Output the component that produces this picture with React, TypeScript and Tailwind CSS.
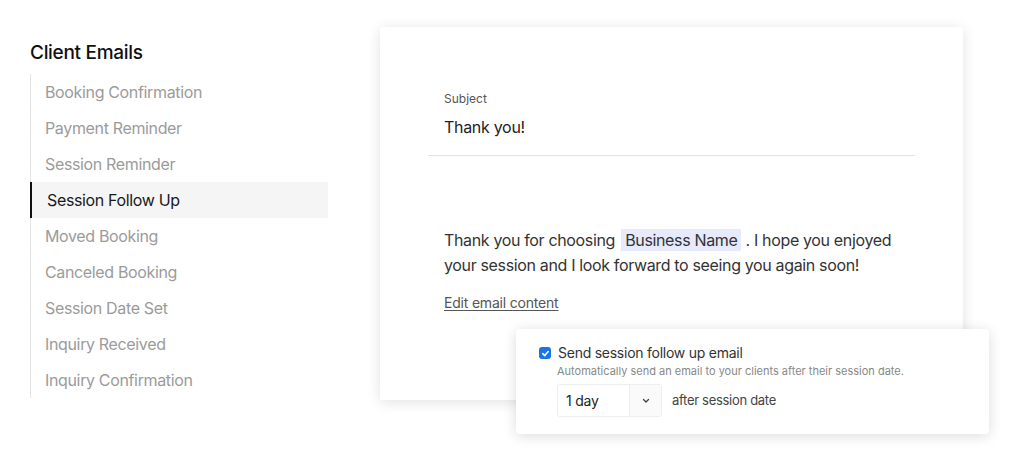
import React from "react";

const items = [
  "Booking Confirmation",
  "Payment Reminder",
  "Session Reminder",
  "Session Follow Up",
  "Moved Booking",
  "Canceled Booking",
  "Session Date Set",
  "Inquiry Received",
  "Inquiry Confirmation",
];

export default function App() {
  return (
    <div
      className="w-[1015px] h-[460px] bg-white relative overflow-hidden"
      style={{ fontFamily: "Inter, 'Liberation Sans', sans-serif" }}
    >
      <div className="flex pt-[27px]">
        {/* Sidebar */}
        <div className="w-[350px] pl-[30px] shrink-0">
          <div className="text-[19px] leading-[24px] text-[#111] mt-[14px] tracking-[-0.3px] font-medium">Client Emails</div>
          <div className="mt-[9px] border-l border-[#e3e3e3] w-[298px]">
            {items.map((it) => {
              const active = it === "Session Follow Up";
              return (
                <div
                  key={it}
                  className={
                    active
                      ? "h-[36px] flex items-center pl-[15px] text-[16px] text-[#1a1a1a] bg-[#f5f5f5] border-l-[2px] border-[#111] -ml-[1px] tracking-[-0.35px]"
                      : "h-[36px] flex items-center pl-[14px] text-[16px] text-[#9b9b9b] tracking-[-0.35px]"
                  }
                >
                  {it}
                </div>
              );
            })}
          </div>
        </div>

        {/* Card */}
        <div className="ml-[30px] w-[583px] h-[373px] bg-white shadow-[0_2px_14px_rgba(0,0,0,0.12)] rounded-[2px] px-[48px] pt-[65px]">
          <div className="px-[16px]">
            <div className="text-[12px] text-[#555] leading-[14px]">Subject</div>
            <div className="text-[16px] text-[#222] mt-[11px] leading-[20px] tracking-[-0.3px]">Thank you!</div>
          </div>
          <div className="mt-[18px] border-t border-[#e2e2e2]" />
          <div className="px-[16px] mt-[72px]">
            <div className="text-[16px] leading-[25px] text-[#333] tracking-[-0.35px]">
              Thank you for choosing{" "}
              <span className="inline-block bg-[#e6eafb] px-[4px] leading-[22px] ml-[2px]">Business Name</span> . I hope you enjoyed
              your session and I look forward to seeing you again soon!
            </div>
            <div className="mt-[14px] text-[14px] text-[#555] underline underline-offset-2 tracking-[-0.2px]">Edit email content</div>
          </div>
        </div>
      </div>

      {/* Popover */}
      <div className="absolute left-[516px] top-[329px] w-[473px] h-[105px] bg-white rounded-[4px] shadow-[0_2px_14px_rgba(0,0,0,0.14)] pl-[23px] pt-[15px]">
        <div className="flex items-center gap-[7px]">
          <div className="w-[12px] h-[12px] rounded-[3px] bg-[#1a73e8] flex items-center justify-center">
            <svg width="9" height="9" viewBox="0 0 10 10">
              <path d="M2 5.2 L4.2 7.3 L8 2.8" stroke="white" strokeWidth="1.8" fill="none" strokeLinecap="round" strokeLinejoin="round" />
            </svg>
          </div>
          <div className="text-[14px] text-[#333] leading-[18px] tracking-[-0.25px]">Send session follow up email</div>
        </div>
        <div className="ml-[18px] mt-[2px] text-[11px] text-[#888] leading-[14px]">
          Automatically send an email to your clients after their session date.
        </div>
        <div className="ml-[18px] mt-[6px] flex items-center">
          <div className="flex h-[33px] border border-[#eee] rounded-[3px]">
            <div className="w-[71px] flex items-center pl-[8px] text-[14px] text-[#222] tracking-[-0.2px]">1 day</div>
            <div className="w-[32px] border-l border-[#eee] bg-[#fafafa] flex items-center justify-center">
              <svg width="8" height="6" viewBox="0 0 8 6">
                <path d="M1.5 1.5 L4 4 L6.5 1.5" stroke="#444" strokeWidth="1.3" fill="none" strokeLinecap="round" />
              </svg>
            </div>
          </div>
          <div className="ml-[10px] text-[13px] text-[#444] tracking-[-0.3px]">after session date</div>
        </div>
      </div>
    </div>
  );
}
